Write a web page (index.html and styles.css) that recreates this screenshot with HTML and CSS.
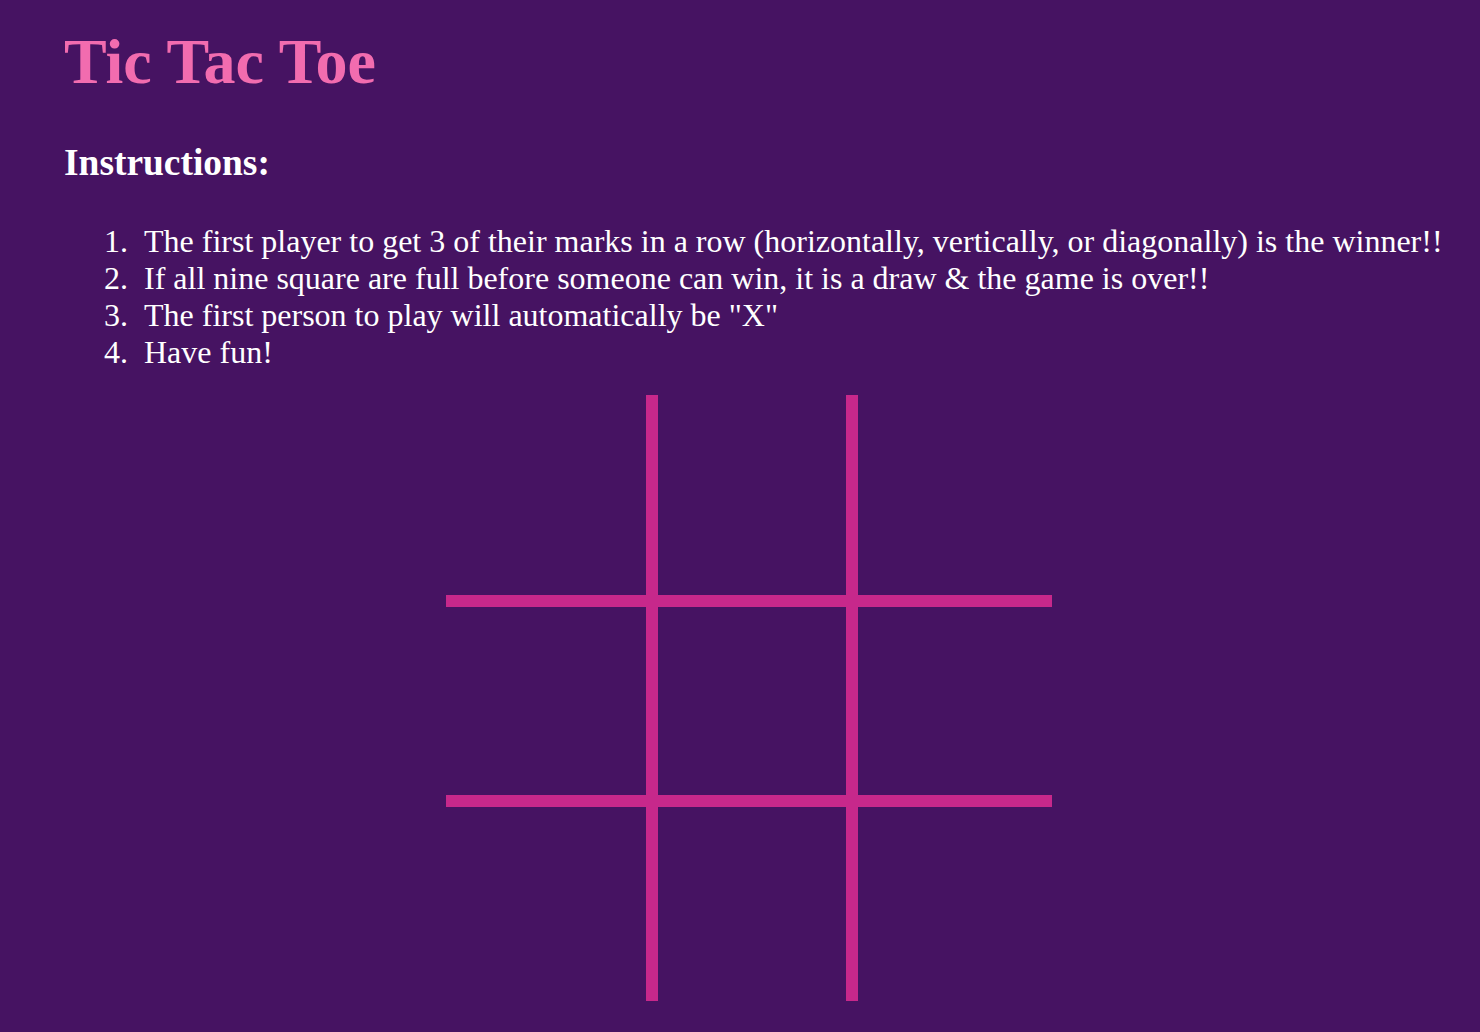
FILE: index.html
```html
<!DOCTYPE html>
<html lang="en">
<head>
<meta charset="utf-8">
<title>Tic Tac Toe</title>
<link rel="stylesheet" href="styles.css">
</head>
<body>
<main class="page">
  <h1 class="title">Tic Tac Toe</h1>
  <h3 class="subtitle">Instructions:</h3>
  <ol class="rules">
    <li>The first player to get 3 of their marks in a row (horizontally, vertically, or diagonally) is the winner!!</li>
    <li>If all nine square are full before someone can win, it is a draw &amp; the game is over!!</li>
    <li>The first person to play will automatically be "X"</li>
    <li>Have fun!</li>
  </ol>
  <div class="board">
    <div class="cell c0 r0"></div>
    <div class="cell c1 r0"></div>
    <div class="cell c2 r0"></div>
    <div class="cell c0 r1"></div>
    <div class="cell c1 r1"></div>
    <div class="cell c2 r1"></div>
    <div class="cell c0 r2"></div>
    <div class="cell c1 r2"></div>
    <div class="cell c2 r2"></div>
  </div>
</main>
</body>
</html>
```

FILE: styles.css
```css
html, body {
  margin: 0;
  padding: 0;
  background: #461362;
}

body {
  font-family: "Liberation Serif", "Times New Roman", serif;
  color: #ffffff;
}

.page {
  padding: 25px 0 0 64px;
  display: flow-root;
}

.title {
  margin: 0;
  font-size: 64px;
  line-height: normal;
  font-weight: bold;
  color: #f26caf;
}

.subtitle {
  margin: 42px 0 0 0;
  font-size: 37.44px;
  line-height: normal;
  font-weight: bold;
  color: #ffffff;
}

.rules {
  margin: 39px 0 0 0;
  padding-left: 80px;
  font-size: 32px;
  line-height: normal;
}

.rules li::marker {
  content: counter(list-item) ".\00a0\00a0";
}

.board {
  margin: 24px 0 0 382px;
  display: grid;
  grid-template-columns: 206px 200px 200px;
  grid-template-rows: 206px 200px 200px;
  width: 606px;
}

.cell {
  box-sizing: border-box;
  border: 0 solid #c7288b;
}

.c0 { border-right-width: 6px; }
.c1 { border-left-width: 6px; border-right-width: 6px; }
.c2 { border-left-width: 6px; }
.r0 { border-bottom-width: 6px; }
.r1 { border-top-width: 6px; border-bottom-width: 6px; }
.r2 { border-top-width: 6px; }
```
